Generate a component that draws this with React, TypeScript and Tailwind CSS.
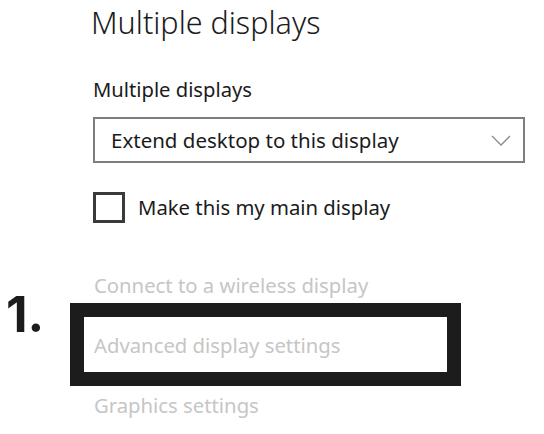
import React from "react";

export default function App() {
  const font = { fontFamily: '"Noto Sans", "Open Sans", sans-serif' };
  return (
    <div className="relative w-[544px] h-[434px] bg-white overflow-hidden" style={font}>
      <div className="pl-[93px] pt-[3px] flex flex-col">
        <div className="-ml-[2px] text-[30.5px] leading-[38px] text-[#1b1b1b] font-light">Multiple displays</div>
        <div className="mt-[36px] text-[20.2px] leading-[24px] text-[#1b1b1b]">Multiple displays</div>
        <div className="mt-[16px] w-[432px] h-[46px] border-2 border-[#7d7d7d] flex items-center justify-between pl-[16px] pr-[12px]">
          <span className="text-[20.5px] text-[#1b1b1b]">Extend desktop to this display</span>
          <svg width="20" height="11" viewBox="0 0 20 11" className="text-[#8a8a8a]">
            <path d="M1 1 L10 10 L19 1" fill="none" stroke="currentColor" strokeWidth="1.3" />
          </svg>
        </div>
        <div className="mt-[29px] flex items-center gap-[13px]">
          <div className="w-[32px] h-[31px] border-[3px] border-[#3a3a3a]" />
          <span className="text-[20.3px] text-[#1b1b1b]">Make this my main display</span>
        </div>
        <div className="mt-[50px] flex flex-col gap-[36px] pl-[1px]">
          <span className="text-[20.3px] leading-[24px] text-[#c6c6c6]">Connect to a wireless display</span>
          <span className="text-[20.3px] leading-[24px] text-[#c6c6c6]">Advanced display settings</span>
          <span className="text-[20.3px] leading-[24px] text-[#c6c6c6]">Graphics settings</span>
        </div>
      </div>
      <div className="absolute left-[70px] top-[303px] w-[391px] h-[83px] border-[14px] border-[#1c1c1c]" />
      <div
        className="absolute left-[6px] top-[286px] text-[50px] leading-[56px] font-bold text-[#1c1c1c]"
        style={{ fontFamily: 'Inter, sans-serif' }}
      >
        1.
      </div>
    </div>
  );
}
